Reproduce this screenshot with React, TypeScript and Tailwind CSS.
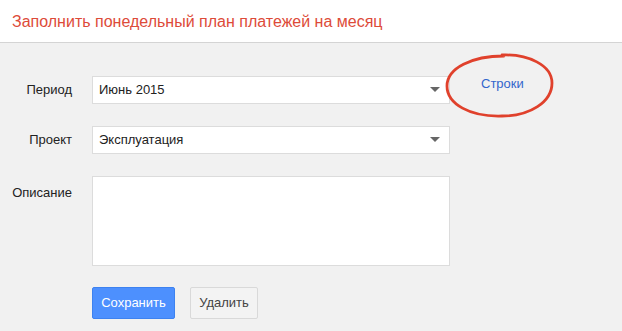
import React from "react";

const FONT = { fontFamily: '"Liberation Sans", Arial, sans-serif' };

function Caret() {
  return (
    <svg width="10" height="6" viewBox="0 0 10 6" className="shrink-0">
      <path d="M0 0h10L5 5z" fill="#666" />
    </svg>
  );
}

function FakeSelect({ value }: { value: string }) {
  return (
    <div className="flex items-center justify-between w-[358px] h-[28px] bg-white border border-[#dcdcdc] pl-[6px] pr-[9px] text-[13px] text-[#222]">
      <span>{value}</span>
      <Caret />
    </div>
  );
}

export default function App() {
  return (
    <div style={FONT} className="w-[622px] h-[331px] bg-[#f1f1f1] overflow-hidden">
      <div className="h-[43px] bg-white border-b border-[#d4d4d4] flex items-center pl-[12px] pt-[1px]">
        <h1 className="text-[16px] text-[#dd4b39]">Заполнить понедельный план платежей на месяц</h1>
      </div>

      <div className="grid grid-cols-[72px_auto] gap-x-[20px] gap-y-[22px] pt-[33px] text-[13px] text-[#222]">
        <div className="flex items-center justify-end h-[28px]">Период</div>
        <div className="flex items-center">
          <FakeSelect value="Июнь 2015" />
          <div className="relative ml-[31px] -mt-[13px]">
            <a className="text-[13px] text-[#3366cc]">Строки</a>
            <svg
              width="112"
              height="68"
              viewBox="0 0 112 68"
              className="absolute left-[-37px] top-[-22px] pointer-events-none"
            >
              <path
                d="M58 3 C 84 2, 108 13, 108 31 C 108 50, 86 64, 58 64 C 26 65, 3 52, 3 34 C 3 16, 28 4, 60 4"
                fill="none"
                stroke="#e0412c"
                strokeWidth="2.8"
                strokeLinecap="round"
              />
            </svg>
          </div>
        </div>

        <div className="flex items-center justify-end h-[28px]">Проект</div>
        <div>
          <FakeSelect value="Эксплуатация" />
        </div>

        <div className="flex justify-end pt-[7px]">Описание</div>
        <div>
          <div className="w-[358px] h-[90px] bg-white border border-[#dcdcdc]" />
        </div>

        <div />
        <div className="flex gap-[15px] -mt-[1px]">
          <button className="w-[83px] h-[32px] rounded-[2px] bg-[#4d90fe] border border-[#3d82f0] text-white text-[13px]">
            Сохранить
          </button>
          <button className="w-[68px] h-[32px] rounded-[2px] bg-[#f3f3f3] border border-[#d9d9d9] text-[#444] text-[13px]">
            Удалить
          </button>
        </div>
      </div>
    </div>
  );
}
